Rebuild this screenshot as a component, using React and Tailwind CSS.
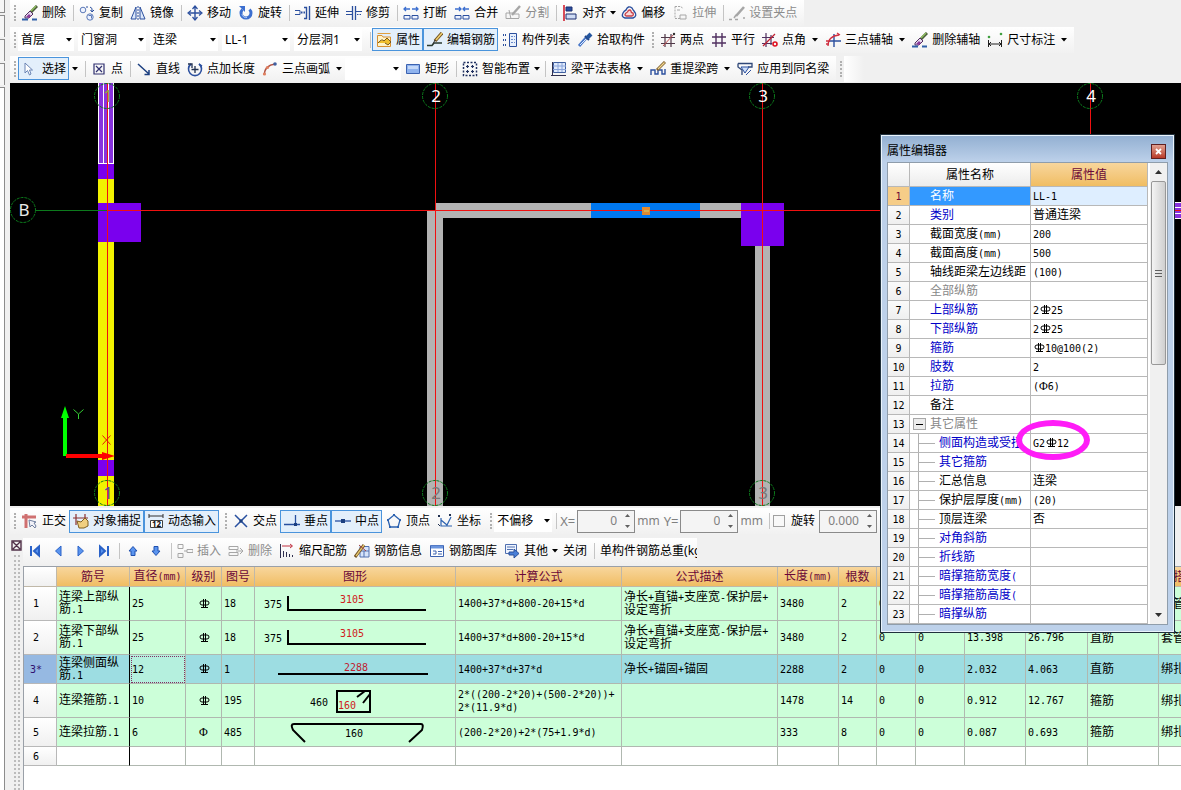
import { useState } from "react";

const MONO = "font-['DejaVu_Sans_Mono','Noto_Sans_CJK_SC',monospace] text-[10px]";

const B = "#2b4f9e";
const G = "#a6a6a6";

const icons = {
  erase: (
    <>
      <path d="M15 1 L8 8" stroke="#4a5a3a" strokeWidth="3" />
      <path d="M14 1 L9 6" stroke="#8fc060" strokeWidth="1.4" />
      <path d="M8 6 L11 9 L7 13 L3 13 L3 11 Z" fill="#e7d9ee" stroke="#503060" />
      <path d="M4 12 L7 9 L9 11 L7 13 Z" fill="#8b3a9a" />
      <path d="M0 14.5 H6 M10 14.5 H15" stroke="#2f5fa8" strokeWidth="2" />
    </>
  ),
  copy: (
    <>
      <circle cx="4" cy="5" r="2.8" fill="#eef3ff" stroke="#5c7ab8" />
      <circle cx="11" cy="12" r="3.2" fill="#eef3ff" stroke="#5c7ab8" />
      <path d="M7 2 H9 M11 2 Q14 3 13 6 M11.5 5 L13 7 L15 5" stroke={B} fill="none" />
      <path d="M9.5 10.5 H12.5 V13.5" stroke="#5c7ab8" fill="none" />
    </>
  ),
  mirror: (
    <>
      <path d="M6 2 V14 H1 Z" fill="#dce8fb" stroke={B} />
      <path d="M10 2 V14 H15 Z" fill="#dce8fb" stroke={B} />
      <path d="M8 1 V15" stroke={B} strokeDasharray="2 1" />
    </>
  ),
  move: (
    <>
      <path d="M8 2 V14 M2 8 H14" stroke={B} strokeWidth="1.4" />
      <path d="M5.5 4 L8 1 L10.5 4 M5.5 12 L8 15 L10.5 12 M4 5.5 L1 8 L4 10.5 M12 5.5 L15 8 L12 10.5" stroke={B} fill="none" strokeWidth="1.2" />
    </>
  ),
  rotate: (
    <>
      <path d="M4.5 4.5 A5 5 0 1 0 11.5 4.5" stroke="#3c6fd0" strokeWidth="3" fill="none" />
      <path d="M1 1 H7 V7 Z" fill="#3c6fd0" />
      <path d="M4 9 A4 4 0 0 0 9 12.5" stroke="#a9c6f5" fill="none" />
    </>
  ),
  extend: (
    <>
      <path d="M0 5.5 H5 V9.5 H0" stroke={B} fill="none" />
      <path d="M6 7.5 H10" stroke={B} strokeDasharray="1.5 1" strokeWidth="2" />
      <path d="M9 2.5 H11.5 V13.5 H9 M14.5 1 V15" stroke={B} fill="none" strokeWidth="1.4" />
    </>
  ),
  trim: (
    <>
      <path d="M0 6.5 H6 M0 9.5 H6 M10 6.5 H16" stroke={B} />
      <path d="M6.5 1 V15 M9.5 1 V15" stroke={B} strokeWidth="1.3" />
      <path d="M11 9.5 H16" stroke={B} strokeDasharray="1.5 1" />
    </>
  ),
  break: (
    <>
      <path d="M7 4 H1 M3 2 L1 4 L3 6 M9 4 H15 M13 2 L15 4 L13 6" stroke="#3c6fd0" fill="none" strokeWidth="1.3" />
      <path d="M1 10.5 H7 V14 H1 Z M9 10.5 H15 V14 H9 Z" fill="#eef3ff" stroke={B} />
    </>
  ),
  merge: (
    <>
      <path d="M1 4 H7 M5 2 L7 4 L5 6 M15 4 H9 M11 2 L9 4 L11 6" stroke="#3c6fd0" fill="none" strokeWidth="1.3" />
      <path d="M1 10.5 H7 V14 H1 Z M9 10.5 H15 V14 H9 Z" fill="#eef3ff" stroke={B} />
    </>
  ),
  split: (
    <>
      <path d="M1 8 H8 M1 13.5 H14 M1 8 V13.5 M9 9 H14 V13" stroke={G} fill="none" />
      <path d="M15 1 L7 10" stroke={G} strokeWidth="2.4" />
      <path d="M4 5 L6 14" stroke={G} />
    </>
  ),
  align: (
    <>
      <path d="M2 0 V16" stroke="#d02030" strokeWidth="1.6" />
      <path d="M4 2 H10 V6 H4 Z" fill="#2b4f9e" stroke="#1c2f70" />
      <path d="M4 9 H14 V14 H4 Z" fill="#cfdcf5" stroke="#1c2f70" />
    </>
  ),
  offset: (
    <>
      <path d="M4 13 Q0 12 2 8 Q3 6 5 5 Q7 0 11 3 Q12 5 13 6 Q17 11 12 13 Z" fill="none" stroke={B} strokeWidth="1.4" />
      <path d="M5 11 Q3 10 5 8 Q7 7 7 6 Q9 4 10 6 Q10 8 12 8 Q13 10 11 11 Z" fill="#f8dada" stroke="#c8404a" strokeWidth="1.3" />
    </>
  ),
  stretch: (
    <>
      <path d="M3 1.5 H9 L11 4 M3 1.5 V13.5 H8" stroke={G} fill="none" strokeDasharray="2 1" />
      <path d="M8 10 H14 V14 H8 Z M5 5 H8" stroke={G} fill="none" />
    </>
  ),
  gripEdit: (
    <>
      <path d="M15 2 L7 11" stroke={G} strokeWidth="2.6" />
      <path d="M7 10 L5 13 M0 14.5 H3 M6 14.5 H9 M14 13 H16" stroke={G} strokeWidth="1.5" />
    </>
  ),
  props: (
    <>
      <path d="M1.5 3.5 H6 L7 5 H14.5 V14.5 H1.5 Z" fill="#fff3c8" stroke="#d89030" />
      <path d="M1.5 1.5 H14.5" stroke="#e0a040" />
      <path d="M2 11 Q6 6 8 9 L11 6 L15 10 L12 13 L9 11" fill="#f0c030" stroke="#7a5a20" />
    </>
  ),
  editBar: (
    <>
      <path d="M0 13.5 H5 L7 11 H15" stroke="#2a3a30" strokeWidth="1.6" fill="none" />
      <path d="M15 1 L8 9" stroke="#705020" strokeWidth="3.4" />
      <path d="M15 1 L9 8" stroke="#f0d070" strokeWidth="1.6" />
      <path d="M8 8 L6 12" stroke="#303030" />
    </>
  ),
  list: (
    <>
      <path d="M1 3 H5 M1 8 H5 M1 13 H5" stroke={B} strokeWidth="2" strokeDasharray="1 1" />
      <path d="M7.5 1.5 H14.5 V14.5 H7.5 Z" fill="#e8f0fc" stroke={B} />
      <path d="M9 4.5 H13 M9 7.5 H13 M9 10.5 H13" stroke="#6a8acb" strokeDasharray="2 1" />
    </>
  ),
  pick: (
    <>
      <path d="M2 14 L9 6" stroke="#4a78c8" strokeWidth="3" />
      <path d="M3 13 L9 7" stroke="#dbe8ff" />
      <path d="M8 4 L12 8" stroke="#1c3f80" strokeWidth="2" />
      <path d="M10 6 L14 2" stroke="#25569e" strokeWidth="4" />
    </>
  ),
  twoPoint: (
    <>
      <path d="M5 2 V15 M11 2 V15 M1 5.5 H15 M1 11.5 H15" stroke="#503848" strokeWidth="1.2" />
      <path d="M3 14 L14 2" stroke="#c05050" />
      <circle cx="14" cy="2" r="1.2" fill="#303030" />
    </>
  ),
  parallel: <path d="M5 1 V15 M11 1 V15 M1 5 H15 M1 11 H15" stroke="#503060" strokeWidth="1.4" />,
  pointAngle: (
    <>
      <path d="M4 1 V15 M9 3 V13 M0 5.5 H12 M0 11.5 H10" stroke="#503060" strokeWidth="1.2" />
      <path d="M1 14 L13 2" stroke="#c02030" strokeWidth="1.3" />
      <circle cx="13" cy="12" r="2" fill="none" stroke="#e01020" strokeWidth="1.6" />
    </>
  ),
  threeAxis: (
    <>
      <path d="M9 2 V15 M4 9 H16" stroke={B} strokeWidth="1.4" />
      <path d="M3 14 Q3 4 14 3 M1 12 H4 M12 1 L15 3 M1 9 H5" stroke="#d03040" fill="none" strokeWidth="1.3" />
    </>
  ),
  dimension: (
    <>
      <path d="M1.5 8 V15 M14.5 8 V15 M2 12 H14 M4 10 L2 12 L4 14 M12 10 L14 12 L12 14" stroke="#202020" fill="none" />
      <circle cx="2" cy="5" r="1.3" fill="#40a040" />
      <circle cx="14" cy="2" r="1.3" fill="#40a040" />
    </>
  ),
  cursor: <path d="M3 2 V12 L5.5 9.5 L7.5 14 L9 13 L7.5 9 H10.5 Z" fill="#fff" stroke="#6a84b4" />,
  point: (
    <>
      <path d="M3 3 H13 V13 H3 Z" fill="none" stroke="#303070" strokeWidth="1.2" />
      <path d="M5 5 L11 11 M11 5 L5 11" stroke="#303070" strokeWidth="1.2" />
    </>
  ),
  line: <path d="M2 3 L13 13 M13 9 V13.5 H8.5" stroke="#1c3f80" fill="none" strokeWidth="1.5" />,
  pointLength: (
    <>
      <path d="M4 3 A6.5 6.5 0 1 0 12 3" stroke={B} fill="none" strokeWidth="1.6" />
      <path d="M1 3 H5 V7 M8 5 V12 M4.5 8.5 H11.5" stroke="#203050" fill="none" strokeWidth="1.3" />
      <path d="M12 3 L15 5" stroke={B} strokeWidth="1.5" />
    </>
  ),
  arc: (
    <>
      <path d="M2 14 Q3 4 13 3" stroke="#b05040" fill="none" strokeWidth="1.6" />
      <circle cx="2.5" cy="13" r="1.6" fill="#e08060" />
      <circle cx="5.5" cy="6.5" r="1.6" fill="#e08060" />
      <circle cx="13" cy="3" r="1.8" fill="#4060a0" />
    </>
  ),
  rect: (
    <>
      <path d="M1.5 3.5 H14.5 V12.5 H1.5 Z" fill="#8fb3ee" stroke="#3c62b0" />
      <path d="M3 5 H13 V8 H3 Z" fill="#c4d8f8" />
    </>
  ),
  smart: (
    <>
      <path d="M1.5 1.5 H14.5 V14.5 H1.5 Z" fill="none" stroke="#203060" strokeWidth="1.5" strokeDasharray="2 1.5" />
      <path d="M5.5 4 V7 M4 5.5 H7 M10.5 4 V7 M9 5.5 H12 M5.5 9 V12 M4 10.5 H7 M10.5 9 V12 M9 10.5 H12" stroke="#203060" strokeWidth="1.2" />
    </>
  ),
  beamTable: (
    <>
      <path d="M2.5 1.5 H14.5 V11.5 H2.5 Z" fill="#dfeafc" stroke="#4060a0" />
      <path d="M2 5 H15 M2 8.5 H15 M7 2 V11 M11 2 V11" stroke="#8aa4da" />
      <path d="M1.5 1 V15 M0 14.5 H15" stroke="#303050" />
    </>
  ),
  beamSpan: (
    <>
      <path d="M1 14 V9 H5 V13 H8 V9 H12 V13 H15 V8" stroke={B} fill="none" strokeWidth="1.4" />
      <path d="M15 1 L7 9" stroke="#806030" strokeWidth="3" />
      <path d="M14.5 1.5 L8 8" stroke="#f0d890" strokeWidth="1.2" />
    </>
  ),
  applyBeam: (
    <>
      <path d="M1 2.5 H15 V6 H11 M1 2.5 V6 L5 9 V14" stroke="#304878" fill="none" strokeWidth="1.3" />
      <path d="M4 6 H12 L8 12 Z" fill="#cfe0fa" stroke={B} />
      <path d="M9 14 L14 9" stroke={B} />
    </>
  ),
  ortho: (
    <>
      <path d="M0 4 H14 M4 1 V15" stroke="#cf7070" strokeWidth="3" />
      <path d="M7 7 L8 14 L10 12 L13 15 L14 13 L12 10 L14 9 Z" fill="#f2f2f8" stroke="#7080a0" />
    </>
  ),
  snap: (
    <>
      <path d="M3 1 V12 M0 5 H15 M12 1 V6" stroke="#8a3030" strokeWidth="1.2" />
      <path d="M4 8 L8 9 L12 5 L15 8 V13 L11 15 H6 Z" fill="#f0cf80" stroke="#806020" />
    </>
  ),
  dynamic: (
    <>
      <path d="M1 1 V5 M15 1 V5 M1 3 H15" stroke="#303030" />
      <path d="M2.5 7.5 H14.5 V14.5 H2.5 Z" fill="#fff" stroke="#404040" />
      <text x="4" y="14" fontSize="8" fontWeight="bold" fill="#101010">12</text>
    </>
  ),
  cross: (
    <>
      <path d="M2 2 L14 14 M14 2 L2 14" stroke="#2850a0" strokeWidth="1.5" />
      <circle cx="8" cy="8" r="1.7" fill="#1c3f80" />
    </>
  ),
  perp: (
    <>
      <path d="M0 11.5 H16 M11.5 2 V11" stroke="#2850a0" strokeWidth="1.3" />
      <path d="M10 10 H13 V13 H10 Z" fill="#1c3f80" />
    </>
  ),
  mid: (
    <>
      <path d="M0 8 H16" stroke="#2850a0" strokeWidth="1.3" />
      <path d="M6 6 H10 V10 H6 Z" fill="#1c3f80" />
    </>
  ),
  vertex: (
    <>
      <path d="M8 2 L14 7 L12 14 H4 L2 7 Z" fill="none" stroke="#2c62b0" strokeWidth="1.3" />
      <path d="M7 1 H9 V3 H7 Z M13 6 H15 V8 H13 Z M1 6 H3 V8 H1 Z M3 13 H5 V15 H3 Z M11 13 H13 V15 H11 Z" fill="#2c62b0" />
    </>
  ),
  coord: (
    <>
      <path d="M4 5 V13 H15 M4 7 L10 12 L14 4" stroke="#2c62b0" fill="none" strokeWidth="1.2" />
      <path d="M1 2 L3 4 M3 2 L1 4 M12 1 L14 3 M14 1 L12 3 M1 11 L3 13" stroke="#203050" />
    </>
  ),
  first: <path d="M4 3 V13 M12 3.5 L7 8 L12 12.5 Z" stroke="#2a62c8" strokeWidth="2" fill="#5a94ee" />,
  prev: <path d="M11 3 L5.5 8 L11 13 Z" stroke="#2a62c8" fill="#5a94ee" />,
  next: <path d="M5 3 L10.5 8 L5 13 Z" stroke="#2a62c8" fill="#5a94ee" />,
  last: <path d="M12 3 V13 M4 3.5 L9 8 L4 12.5 Z" stroke="#2a62c8" strokeWidth="2" fill="#5a94ee" />,
  up: <path d="M8 3.5 L12 8 H10 V12.5 H6 V8 H4 Z" fill="#5a94ee" stroke="#1f50b0" />,
  down: <path d="M8 12.5 L12 8 H10 V3.5 H6 V8 H4 Z" fill="#5a94ee" stroke="#1f50b0" />,
  insert: <path d="M1 1.5 H6 V5.5 H1 Z M1 10.5 H6 V14.5 H1 Z M7 8 H10 M10 6.5 H16 V9.5 H10 Z" fill="none" stroke={G} />,
  removeRow: <path d="M1 3.5 H10 V6.5 H1 Z M1 9.5 H10 V12.5 H1 Z M8 8 H15 M12 5 L15 8 L12 11" fill="none" stroke={G} />,
  scale: (
    <>
      <path d="M1.5 1 V15 M4.5 8 V14 M7.5 9 V14 M10.5 11 V14 M13.5 12 V14" stroke="#303050" />
      <path d="M3 3 H13 M11 1 L13.5 3 L11 5" stroke="#c03040" fill="none" />
    </>
  ),
  info: (
    <>
      <path d="M6 3.5 H15 V14 H6 Z M6 8 H15 M10 8 V14" fill="#d6e4fa" stroke="#5070b0" />
      <path d="M1 14 L10 2" stroke="#705020" strokeWidth="3" />
      <path d="M2 13 L10 2" stroke="#e6c870" strokeWidth="1.3" />
      <path d="M5 2 L12 8" stroke="#a04040" />
    </>
  ),
  library: (
    <>
      <path d="M1.5 2.5 H14.5 V13.5 H1.5 Z" fill="#fff" stroke="#3c62b0" />
      <path d="M2 4 H14" stroke="#6a94dd" strokeWidth="3" />
      <path d="M4 8 H7 V11 H4 M9 8.5 H13 M9 11 H13" stroke="#3c62b0" fill="none" />
    </>
  ),
  other: (
    <>
      <path d="M1.5 1.5 H12.5 V10.5 H1.5 Z M3 4 H11 M3 6.5 H9" fill="#f0f5ff" stroke="#5070b0" />
      <path d="M5 9 H10 V6 L15 10.5 L10 15 V12 H5 Z" fill="#4a80d8" stroke="#2a509a" />
    </>
  ),
};

const Icon = ({ name }) => (
  <svg width="16" height="16" viewBox="0 0 16 16" fill="none" className="shrink-0" aria-hidden="true">
    {icons[name]}
  </svg>
);

const Caret = () => (
  <svg width="6" height="4" viewBox="0 0 6 4" className="shrink-0" aria-hidden="true">
    <path d="M0 0 H6 L3 3.5 Z" fill="#000" />
  </svg>
);

const Grip = () => (
  <span className="ml-1 mr-0.5 h-4 w-0 shrink-0 border-l-2 border-dotted border-[#b0b0b0]" />
);

const Sep = () => <span className="ml-1 mr-px h-4 w-px shrink-0 bg-[#c4c4c4]" />;

// arrow: "split" is a separate drop-down part, "tight" sits right behind the label
const Tool = ({ icon, label, active, disabled, arrow }) => (
  <span className="flex shrink-0 items-center">
    <button
      type="button"
      disabled={disabled}
      className={`flex h-[23px] items-center gap-1 border pl-[3px] pr-0.5 whitespace-nowrap ${
        active ? "border-[#4a94dc] bg-[#e3effb]" : "border-transparent"
      } ${disabled ? "text-[#8c8c8c]" : "text-black"}`}
    >
      {icon ? <Icon name={icon} /> : null}
      {label}
    </button>
    {arrow ? (
      <span className={`flex justify-center ${arrow === "tight" ? "w-2" : "w-3"}`}>
        <Caret />
      </span>
    ) : null}
  </span>
);

const Combo = ({ label, value, width }) => (
  <span className={`relative flex h-[22px] shrink-0 items-center bg-white ${width}`}>
    <select
      aria-label={label}
      defaultValue={value}
      className="h-full w-full appearance-none bg-transparent pl-[3px] outline-none"
    >
      <option>{value}</option>
    </select>
    <span className="pointer-events-none absolute right-0.5">
      <Caret />
    </span>
  </span>
);

const Bar = ({ children }) => (
  <div className="inline-flex h-[26px] items-center bg-linear-to-b from-white to-[#f1f1f1] pr-1">{children}</div>
);

const Spin = ({ id, label, value }) => (
  <span className="flex h-[23px] w-[58px] shrink-0 items-center border border-[#8a8a8a] bg-[#f4f4f4] pr-1">
    <input
      id={id}
      aria-label={label}
      defaultValue={value}
      className="w-full min-w-0 bg-transparent pr-2 text-right text-[#808080] outline-none"
    />
    <span className="flex flex-col gap-2">
      <svg width="5" height="3"><path d="M0 3 H5 L2.5 0 Z" fill="#606060" /></svg>
      <svg width="5" height="3"><path d="M0 0 H5 L2.5 3 Z" fill="#606060" /></svg>
    </span>
  </span>
);

const RibbedBar = () => (
  <svg width="12" height="10" viewBox="0 0 12 10" className="inline-block align-[-1px]" role="img" aria-label="HRB400">
    <path d="M4 2 H9 Q11 2 11 4 Q11 6 9 6 H4 Q2 6 2 4 Q2 2 4 2 Z M5.5 0 V9 M7.5 0 V9 M3 8.5 H10" fill="none" stroke="#000" />
  </svg>
);

// "#" stands for the ribbed bar sign, latin runs take the half-width face
const Mix = ({ text }) =>
  text.split(/(#|Φ|[\x20-\x22\x24-\x7e]+)/).map((part, i) => {
    if (part === "#") return <RibbedBar key={i} />;
    if (part === "Φ") return <span key={i} className="font-['Liberation_Serif',serif]">Φ</span>;
    if (i % 2) return <span key={i} className={MONO}>{part}</span>;
    return part;
  });

const AxisBubble = ({ x, y, label, color }) => (
  <g>
    <circle cx={x} cy={y} r="12.5" fill="none" stroke="#0c7a1c" strokeDasharray="3 1" />
    <text x={x + 1} y={y + 6} fontSize="17" textAnchor="middle" fill={color}>{label}</text>
  </g>
);

const Drawing = () => (
  <svg className="block h-[423px] w-full bg-black font-['Noto_Sans',sans-serif]">
    <g transform="translate(-10 -83)">
      <g shapeRendering="crispEdges">
        <rect x="98" y="83" width="16" height="81" fill="#8833dd" />
        <path d="M98.5 83 V163.5 H113.5 V83 M103.5 83 V163 M108.5 83 V163" stroke="#fff" fill="none" />
        <rect x="98" y="164" width="16" height="15" fill="#7a00ee" />
        <rect x="98" y="179" width="16" height="327" fill="#f2f200" />
        <rect x="98" y="203" width="43" height="39" fill="#7a00ee" />
        <rect x="98" y="460" width="16" height="16" fill="#7a00ee" />
        <rect x="427" y="211" width="16" height="295" fill="#b3b3b3" />
        <rect x="436" y="203" width="305" height="15" fill="#b3b3b3" />
        <rect x="591" y="203" width="109" height="15" fill="#0078f0" />
        <rect x="755" y="246" width="15" height="260" fill="#b3b3b3" />
        <rect x="741" y="203" width="43" height="43" fill="#7a00ee" />
        <rect x="1150" y="202" width="400" height="17" fill="#8833dd" />
        <path d="M1150 202.5 H1550 M1150 207.5 H1550 M1150 213.5 H1550 M1150 218.5 H1550" stroke="#fff" />
        <rect x="36" y="210" width="71" height="1" fill="#0c7a1c" />
        <g fill="#f01010">
          <rect x="107" y="210" width="1443" height="1" />
          <rect x="107" y="83" width="1" height="423" />
          <rect x="435" y="83" width="1" height="423" />
          <rect x="762" y="83" width="1" height="423" />
          <rect x="1090" y="83" width="1" height="423" />
        </g>
        <rect x="642" y="207" width="8" height="8" fill="#e08a30" />
        <rect x="644" y="210" width="5" height="2" fill="#d8b050" />
      </g>
      <AxisBubble x={107} y={96} label="1" color="#8fae40" />
      <AxisBubble x={435} y={96} label="2" color="#fff" />
      <AxisBubble x={762} y={96} label="3" color="#fff" />
      <AxisBubble x={1090} y={96} label="4" color="#fff" />
      <AxisBubble x={107} y={493} label="1" color="#5a4a9a" />
      <AxisBubble x={435} y={493} label="2" color="#777" />
      <AxisBubble x={762} y={493} label="3" color="#777" />
      <AxisBubble x={23} y={210} label="B" color="#e8e8e8" />
      <path d="M65 456 V416" stroke="#0f0" strokeWidth="4" />
      <path d="M61 418 L65 406 L69 418 Z" fill="#0f0" />
      <path d="M66 456 H103" stroke="#f00" strokeWidth="4" />
      <path d="M102 452 L115 456 L102 460 Z" fill="#f00" />
      <path d="M73.5 409.5 L78.5 414 L83.5 409.5 M78.5 414 V419" stroke="#3c3" fill="none" />
      <path d="M102.5 435.5 L110.5 444.5 M110.5 435.5 L102.5 444.5" stroke="#e02000" />
    </g>
  </svg>
);

const Shape = ({ height, children }) => (
  <svg width="200" height={height} className="block font-['DejaVu_Sans_Mono',monospace]" fontSize="10">
    <g stroke="#000" strokeWidth="2" fill="none">{children[0]}</g>
    {children[1]}
  </svg>
);

const hookShape = (
  <Shape height={33}>
    <path d="M33 9 V23 H171" />
    <>
      <text x="9" y="21">375</text>
      <text x="85" y="16" fill="#d02020">3105</text>
    </>
  </Shape>
);

const straightShape = (
  <Shape height={28}>
    <path d="M23 19 H173" />
    <text x="89" y="16" fill="#c02030">2288</text>
  </Shape>
);

const stirrupShape = (
  <Shape height={33}>
    <path d="M82 7 H115 V28 H82 Z M102 13 L110 7 M108 19 L115 10" />
    <>
      <text x="55" y="22">460</text>
      <text x="83" y="25" fill="#d02020">160</text>
    </>
  </Shape>
);

const tieShape = (
  <Shape height={28}>
    <path d="M50 24 L38 12 Q35 6 39 6 H166 Q169 6 167 12 L154 24" />
    <text x="90" y="19">160</text>
  </Shape>
);

const barColumns = [
  { title: "", width: "w-[33px]" },
  { title: "筋号", width: "w-[73px]" },
  { title: "直径(mm)", width: "w-14" },
  { title: "级别", width: "w-9" },
  { title: "图号", width: "w-[33px]" },
  { title: "图形", width: "w-[201px]" },
  { title: "计算公式", width: "w-[166px]" },
  { title: "公式描述", width: "w-[156px]" },
  { title: "长度(mm)", width: "w-[61px]" },
  { title: "根数", width: "w-[38px]" },
  { title: "搭接", width: "w-[39px]" },
  { title: "损耗", width: "w-[49px]" },
  { title: "单重(kg)", width: "w-[61px]" },
  { title: "总重(kg)", width: "w-[62px]" },
  { title: "钢筋归类", width: "w-[71px]" },
  { title: "搭接形式", width: "w-[78px]" },
];

const barRows = [
  { no: "1", height: "h-[34px]", cells: ["连梁上部纵筋.1", "25", "#", "18", hookShape, "1400+37*d+800-20+15*d", "净长+直锚+支座宽-保护层+设定弯折", "3480", "2", "0", "0", "13.398", "26.796", "直筋", "套管连接"] },
  { no: "2", height: "h-[34px]", cells: ["连梁下部纵筋.1", "25", "#", "18", hookShape, "1400+37*d+800-20+15*d", "净长+直锚+支座宽-保护层+设定弯折", "3480", "2", "0", "0", "13.398", "26.796", "直筋", "套管连接"] },
  { no: "3*", height: "h-[29px]", selected: true, cells: ["连梁侧面纵筋.1", "12", "#", "1", straightShape, "1400+37*d+37*d", "净长+锚固+锚固", "2288", "2", "0", "0", "2.032", "4.063", "直筋", "绑扎"] },
  { no: "4", height: "h-[34px]", cells: ["连梁箍筋.1", "10", "#", "195", stirrupShape, "2*((200-2*20)+(500-2*20))+2*(11.9*d)", "", "1478", "14", "0", "0", "0.912", "12.767", "箍筋", "绑扎"] },
  { no: "5", height: "h-[29px]", cells: ["连梁拉筋.1", "6", "Φ", "485", tieShape, "(200-2*20)+2*(75+1.9*d)", "", "333", "8", "0", "0", "0.087", "0.693", "箍筋", "绑扎"] },
  { no: "6", height: "h-[19px]", blank: true, cells: Array(15).fill("") },
];

const cellPadding = (i) => {
  if (i === 2) return "text-center";
  if (i === 4) return "";
  return i === 0 || i === 5 || i === 6 ? "pl-0.5 pr-1.5" : "pl-0.5";
};

const BarTable = () => (
  <table className="w-[1213px] table-fixed border-separate border-spacing-0">
    <thead>
      <tr className="h-5">
        {barColumns.map((col, i) => (
          <th
            key={i}
            className={`border-r border-b border-[#c0b8a8] p-0 font-normal leading-4 whitespace-nowrap text-[#6b0838] ${col.width} ${
              i ? "bg-linear-to-b from-[#f8d69c] to-[#f0bd62]" : "bg-linear-to-b from-white to-[#f0f0f0]"
            }`}
          >
            <Mix text={col.title} />
          </th>
        ))}
      </tr>
    </thead>
    <tbody>
      {barRows.map((row) => (
        <tr key={row.no} className={`${row.height} ${row.blank ? "bg-white" : row.selected ? "bg-[#9ddde2]" : "bg-[#ccffd9]"}`}>
          <td
            className={`border-r border-b border-[#b8b8b8] p-0 pr-2 text-center leading-3 ${
              row.selected ? "bg-[#96b9e2] text-[#301070]" : "bg-linear-to-b from-white to-[#f0f0f0]"
            }`}
          >
            <Mix text={row.no} />
          </td>
          {row.cells.map((cell, i) => (
            <td
              key={i}
              className={`border-r border-b p-0 leading-3 [line-break:anywhere] ${
                i === 0 ? "border-r-black border-b-[#b0b8b0]" : "border-[#b0b8b0]"
              } ${cellPadding(i)} ${
                row.selected && i === 1 ? "bg-[#b5f0de] outline outline-dotted outline-[#803060] -outline-offset-2" : ""
              }`}
            >
              {typeof cell === "string" ? <Mix text={cell} /> : cell}
            </td>
          ))}
        </tr>
      ))}
    </tbody>
  </table>
);

const properties = [
  { name: "名称", value: "LL-1", tone: "selected" },
  { name: "类别", value: "普通连梁", tone: "blue" },
  { name: "截面宽度(mm)", value: "200" },
  { name: "截面高度(mm)", value: "500" },
  { name: "轴线距梁左边线距", value: "(100)" },
  { name: "全部纵筋", value: "", tone: "gray" },
  { name: "上部纵筋", value: "2#25", tone: "blue" },
  { name: "下部纵筋", value: "2#25", tone: "blue" },
  { name: "箍筋", value: "#10@100(2)", tone: "blue" },
  { name: "肢数", value: "2", tone: "blue" },
  { name: "拉筋", value: "(Φ6)", tone: "blue" },
  { name: "备注", value: "" },
  { name: "其它属性", value: "", tone: "gray", group: true },
  { name: "侧面构造或受扭", value: "G2#12", tone: "blue", child: true },
  { name: "其它箍筋", value: "", tone: "blue", child: true },
  { name: "汇总信息", value: "连梁", child: true },
  { name: "保护层厚度(mm)", value: "(20)", child: true },
  { name: "顶层连梁", value: "否", child: true },
  { name: "对角斜筋", value: "", tone: "blue", child: true },
  { name: "折线筋", value: "", tone: "blue", child: true },
  { name: "暗撑箍筋宽度(", value: "", tone: "blue", child: true },
  { name: "暗撑箍筋高度(", value: "", tone: "blue", child: true },
  { name: "暗撑纵筋", value: "", tone: "blue", child: true },
];

const tones = {
  selected: "bg-[#3399ff] text-white",
  blue: "text-[#0000c8]",
  gray: "text-[#888888]",
};

const PropertyName = ({ item, open, onToggle }) => (
  <span className="flex h-[18px] items-center overflow-hidden whitespace-nowrap">
    {item.child ? (
      <span className="ml-2 mr-1 flex h-[18px] w-[17px] shrink-0 items-center border-l border-[#b0b0b0]">
        <span className="h-px w-full bg-[#b0b0b0]" />
      </span>
    ) : item.group ? (
      <button
        type="button"
        aria-label={item.name}
        onClick={onToggle}
        className="ml-[3px] mr-1 flex h-3 w-[13px] shrink-0 items-center justify-center border border-[#a8a8a8] bg-[#ececec]"
      >
        <span className={`w-[7px] bg-black ${open ? "h-px" : "h-[7px]"}`} />
      </button>
    ) : (
      <span className="w-5 shrink-0" />
    )}
    <span><Mix text={item.name} /></span>
  </span>
);

const PropertyEditor = () => {
  const [open, setOpen] = useState(true);

  return (
    <section className="absolute top-[134px] right-[6px] z-10 w-[295px] border border-[#20303c] bg-[#bdd1ea] p-px shadow-[inset_0_0_0_1px_#eaf4fc]">
      <header className="flex h-[26px] items-center justify-between bg-linear-to-b from-[#93b0d2] to-[#bdd1ea] pt-1 pr-[7px] pl-[5px]">
        <h2>属性编辑器</h2>
        <button type="button" aria-label="关闭属性编辑器" className="flex h-[15px] w-[15px] items-center justify-center border border-[#602020] bg-linear-to-b from-[#e0a090] to-[#b83828]">
          <svg width="7" height="7"><path d="M1 1 L6 6 M6 1 L1 6" stroke="#fff" strokeWidth="1.8" /></svg>
        </button>
      </header>
      <div className="mx-[5px] mb-1.5 flex border border-[#8f9dab] bg-white">
        <table className="w-[260px] table-fixed border-separate border-spacing-0">
          <thead>
            <tr className="h-6">
              <th className="w-[22px] border-r border-b border-[#b8b8b8] bg-linear-to-b from-white to-[#ececec] p-0" />
              <th className="w-[121px] border-r border-b border-[#b8b8b8] bg-linear-to-b from-white to-[#ececec] p-0 font-normal">属性名称</th>
              <th className="w-[117px] border-r border-b border-[#b8b8b8] bg-linear-to-b from-[#f8d69c] to-[#f0bd62] p-0 font-normal text-[#6b0838]">属性值</th>
            </tr>
          </thead>
          <tbody>
            {properties.map((item, i) =>
              item.child && !open ? null : (
                <tr key={i} className="h-[19px] leading-[14px]">
                  <td
                    className={`border-r border-b border-[#b8b8b8] p-0 text-center ${
                      i ? "bg-linear-to-b from-[#fafafa] to-[#efefef]" : "bg-[#f6cd88] text-[#6b0838]"
                    }`}
                  >
                    <Mix text={String(i + 1)} />
                  </td>
                  <td className={`border-r border-b border-[#b8b8b8] p-0 ${tones[item.tone] || "text-black"}`}>
                    <PropertyName item={item} open={open} onToggle={() => setOpen(!open)} />
                  </td>
                  <td className={`border-r border-b border-[#b8b8b8] p-0 pl-0.5 ${i ? "" : "bg-[#deeeff]"}`}>
                    <Mix text={item.value} />
                  </td>
                </tr>
              )
            )}
          </tbody>
        </table>
        <div className="ml-0.5 flex flex-1 flex-col items-center bg-[#f0f0f0]">
          <span className="flex h-[18px] items-center">
            <svg width="7" height="4"><path d="M0 4 H7 L3.5 0 Z" fill="#303030" /></svg>
          </span>
          <span className="flex h-[184px] w-[15px] flex-col items-center justify-center gap-0.5 rounded-xs border border-[#989898] bg-linear-to-r from-[#f4f4f4] to-[#cfcfcf]">
            <span className="h-px w-[7px] bg-[#606060]" />
            <span className="h-px w-[7px] bg-[#606060]" />
            <span className="h-px w-[7px] bg-[#606060]" />
          </span>
          <span className="mt-auto flex h-[18px] items-center">
            <svg width="7" height="4"><path d="M0 0 H7 L3.5 4 Z" fill="#303030" /></svg>
          </span>
        </div>
      </div>
      <span className="pointer-events-none absolute top-[285px] left-[135px] h-10 w-[74px] rounded-[50%] border-[6px] border-[#ff1cf7]" />
    </section>
  );
};

const App = () => (
  <div className="relative flex min-h-screen overflow-hidden bg-[#f0f0f0] font-['Noto_Sans','Noto_Sans_CJK_SC',sans-serif] text-xs leading-4 text-black">
    <aside className="flex w-[5px] shrink-0 flex-col gap-0.5">
      <span className="h-[13px] border-r border-b border-[#8c8c8c] bg-[#f6f6f6]" />
      <span className="h-[22px] border-t border-r border-[#8c8c8c] bg-[#f6f6f6]" />
      <span className="h-[22px] border-t border-r border-[#8c8c8c] bg-[#f6f6f6]" />
      <span className="h-[22px] border-t border-r border-[#8c8c8c] bg-[#f6f6f6]" />
      <span className="flex-1 border-t border-r border-[#8c8c8c] bg-white" />
    </aside>

    <main className="flex min-w-0 flex-1 flex-col pl-[5px]">
      <div className="flex h-[25px] items-center">
        <Bar>
          <Grip />
          <Tool icon="erase" label="删除" />
          <Sep />
          <Tool icon="copy" label="复制" />
          <Tool icon="mirror" label="镜像" />
          <Sep />
          <Tool icon="move" label="移动" />
          <Tool icon="rotate" label="旋转" />
          <Sep />
          <Tool icon="extend" label="延伸" />
          <Tool icon="trim" label="修剪" />
          <Sep />
          <Tool icon="break" label="打断" />
          <Tool icon="merge" label="合并" />
          <Tool icon="split" label="分割" disabled />
          <Sep />
          <Tool icon="align" label="对齐" arrow="tight" />
          <Tool icon="offset" label="偏移" />
          <Tool icon="stretch" label="拉伸" disabled />
          <Sep />
          <Tool icon="gripEdit" label="设置夹点" disabled />
        </Bar>
      </div>

      <div className="flex h-[29px] items-center">
        <Bar>
          <Grip />
          <span className="flex gap-1 pr-1">
            <Combo label="楼层" value="首层" width="w-14" />
            <Combo label="构件类别" value="门窗洞" width="w-[68px]" />
            <Combo label="构件类型" value="连梁" width="w-[68px]" />
            <Combo label="构件名称" value="LL-1" width="w-[68px]" />
            <Combo label="分层" value="分层洞1" width="w-[68px]" />
          </span>
          <Sep />
          <Tool icon="props" label="属性" active />
          <Tool icon="editBar" label="编辑钢筋" active />
          <Tool icon="list" label="构件列表" />
          <Tool icon="pick" label="拾取构件" />
          <Grip />
          <Tool icon="twoPoint" label="两点" />
          <Tool icon="parallel" label="平行" />
          <Tool icon="pointAngle" label="点角" arrow="split" />
          <Tool icon="threeAxis" label="三点辅轴" arrow="split" />
          <Tool icon="erase" label="删除辅轴" />
          <Tool icon="dimension" label="尺寸标注" arrow="split" />
        </Bar>
      </div>

      <div className="flex h-[29px] items-center">
        <Bar>
          <Grip />
          <Tool icon="cursor" label="选择" active arrow="split" />
          <Sep />
          <Tool icon="point" label="点" />
          <Sep />
          <Tool icon="line" label="直线" />
          <Tool icon="pointLength" label="点加长度" />
          <Tool icon="arc" label="三点画弧" arrow="split" />
          <Combo label="画弧方式" value="" width="w-14" />
          <Tool icon="rect" label="矩形" />
          <Sep />
          <Tool icon="smart" label="智能布置" arrow="tight" />
          <Sep />
          <Tool icon="beamTable" label="梁平法表格" arrow="split" />
          <Tool icon="beamSpan" label="重提梁跨" arrow="split" />
          <Tool icon="applyBeam" label="应用到同名梁" />
        </Bar>
        <span className="flex w-7 items-center">
          <Grip />
          <span className="h-[26px] flex-1 bg-linear-to-r from-white to-[#f0f0f0]" />
        </span>
      </div>

      <Drawing />

      <div className="flex h-[30px] items-center">
        <Bar>
          <Grip />
          <Tool icon="ortho" label="正交" />
          <Tool icon="snap" label="对象捕捉" active />
          <Tool icon="dynamic" label="动态输入" active />
          <span className="w-0.5" />
          <Grip />
          <Tool icon="cross" label="交点" />
          <Tool icon="perp" label="垂点" active />
          <Tool icon="mid" label="中点" active />
          <Tool icon="vertex" label="顶点" />
          <Tool icon="coord" label="坐标" />
          <span className="w-0.5" />
          <Grip />
          <Combo label="偏移方式" value="不偏移" width="w-[58px]" />
          <Sep />
          <label htmlFor="offset-x" className="mx-0.5 text-[13px] text-[#808080]">X=</label>
          <Spin id="offset-x" value="0" />
          <span className="mx-0.5 text-[#808080]">mm</span>
          <label htmlFor="offset-y" className="mx-0.5 text-[13px] text-[#808080]">Y=</label>
          <Spin id="offset-y" value="0" />
          <span className="mx-0.5 text-[#808080]">mm</span>
          <Sep />
          <input id="rotate" type="checkbox" className="mx-0.5 h-3 w-3 appearance-none border border-[#a0a0a0] bg-[#f8f8f8]" />
          <label htmlFor="rotate" className="mx-1">旋转</label>
          <Spin id="angle" label="旋转角度" value="0.000" />
        </Bar>
      </div>

      <div className="flex flex-1">
        <div className="flex w-[13px] shrink-0 flex-col items-center pt-1">
          <button type="button" aria-label="关闭" className="h-[11px] w-[11px]">
            <svg width="11" height="11"><path d="M1 1 H10 V10 H1 Z M2 2 L9 9 M9 2 L2 9" stroke="#503048" fill="none" strokeWidth="1.4" /></svg>
          </button>
          <span className="mt-1 flex flex-1 gap-0.5">
            <span className="border-l-2 border-dotted border-[#bcbcbc]" />
            <span className="border-l-2 border-dotted border-[#bcbcbc]" />
          </span>
        </div>
        <div className="flex min-w-0 flex-1 flex-col">
          <div className="flex h-[30px] items-center">
            <div className="flex h-[26px] max-w-[674px] items-center overflow-hidden bg-linear-to-b from-white to-[#f1f1f1]">
              {["first", "prev", "next", "last"].map((name) => (
                <button key={name} type="button" aria-label={name} className="flex w-[23px] shrink-0 justify-center">
                  <Icon name={name} />
                </button>
              ))}
              <Sep />
              {["up", "down"].map((name) => (
                <button key={name} type="button" aria-label={name} className="flex w-[23px] shrink-0 justify-center">
                  <Icon name={name} />
                </button>
              ))}
              <Sep />
              <Tool icon="insert" label="插入" disabled />
              <Tool icon="removeRow" label="删除" disabled />
              <Tool icon="scale" label="缩尺配筋" />
              <Tool icon="info" label="钢筋信息" />
              <Tool icon="library" label="钢筋图库" />
              <Tool icon="other" label="其他" arrow="tight" />
              <Tool label="关闭" />
              <Sep />
              <Tool label="单构件钢筋总重(kg)" />
            </div>
          </div>
          <div className="flex-1 overflow-hidden border-t border-l border-[#9aa0a8] bg-white">
            <BarTable />
          </div>
        </div>
      </div>
    </main>

    <PropertyEditor />
  </div>
);

export default App;
